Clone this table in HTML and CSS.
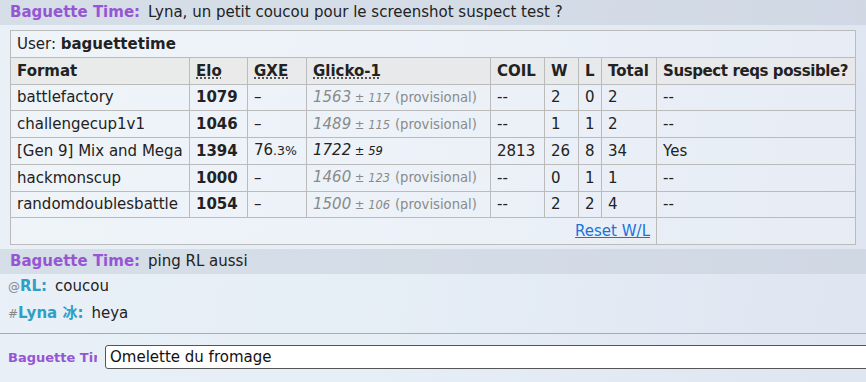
FILE: index.html
```html
<!DOCTYPE html>
<html lang="fr">
<head>
<meta charset="utf-8">
<title>Chat</title>
<link rel="stylesheet" href="styles.css">
</head>
<body>
<div class="room">
  <div class="log">
    <div class="chat hl"><strong class="name purple">Baguette Time:</strong><em class="msg">Lyna, un petit coucou pour le screenshot suspect test ?</em></div>
    <div class="infobox">
      <table class="ladder">
        <colgroup>
          <col class="c-format"><col class="c-elo"><col class="c-gxe"><col class="c-glicko"><col class="c-coil"><col class="c-w"><col class="c-l"><col class="c-total"><col class="c-sus">
        </colgroup>
        <tr><td colspan="9">User: <strong>baguettetime</strong></td></tr>
        <tr class="head">
          <th>Format</th>
          <th><abbr>Elo</abbr></th>
          <th><abbr>GXE</abbr></th>
          <th><abbr>Glicko-1</abbr></th>
          <th>COIL</th><th>W</th><th>L</th><th>Total</th><th class="sus">Suspect reqs possible?</th>
        </tr>
        <tr><td>battlefactory</td><td><strong>1079</strong></td><td>–</td><td class="prov"><em>1563<small> ± 117</small></em> <span class="pv">(provisional)</span></td><td>--</td><td>2</td><td>0</td><td>2</td><td>--</td></tr>
        <tr><td>challengecup1v1</td><td><strong>1046</strong></td><td>–</td><td class="prov"><em>1489<small> ± 115</small></em> <span class="pv">(provisional)</span></td><td>--</td><td>1</td><td>1</td><td>2</td><td>--</td></tr>
        <tr><td>[Gen 9] Mix and Mega</td><td><strong>1394</strong></td><td>76<small class="pct">.3%</small></td><td><em>1722<small> ± 59</small></em></td><td>2813</td><td>26</td><td>8</td><td>34</td><td>Yes</td></tr>
        <tr><td>hackmonscup</td><td><strong>1000</strong></td><td>–</td><td class="prov"><em>1460<small> ± 123</small></em> <span class="pv">(provisional)</span></td><td>--</td><td>0</td><td>1</td><td>1</td><td>--</td></tr>
        <tr><td>randomdoublesbattle</td><td><strong>1054</strong></td><td>–</td><td class="prov"><em>1500<small> ± 106</small></em> <span class="pv">(provisional)</span></td><td>--</td><td>2</td><td>2</td><td>4</td><td>--</td></tr>
        <tr><td colspan="8" class="reset"><a href="#">Reset W/L</a></td><td></td></tr>
      </table>
    </div>
    <div class="chat hl"><strong class="name purple">Baguette Time:</strong><em class="msg">ping RL aussi</em></div>
    <div class="chat"><strong class="name teal"><small class="rank">@</small>RL:</strong><em class="msg">coucou</em></div>
    <div class="chat"><strong class="name teal"><small class="rank">#</small>Lyna 冰:</strong><em class="msg">heya</em></div>
  </div>
  <div class="composer">
    <span class="me">Baguette Time</span>
    <div class="field">Omelette du fromage</div>
  </div>
</div>
</body>
</html>
```

FILE: styles.css
```css
html, body {
  margin: 0;
  padding: 0;
  height: 100%;
}
body {
  font-family: "DejaVu Sans", Verdana, "Noto Sans CJK SC", sans-serif;
  font-size: 15px;
  color: #222;
  background: linear-gradient(100deg, #e9f0f6 0%, #e6eef6 45%, #dfe5f1 100%);
  overflow: hidden;
}
.room {
  display: flex;
  flex-direction: column;
  height: 382px;
}
.log {
  flex: 0 0 334px;
  border-bottom: 1px solid #a9acaf;
  box-sizing: border-box;
}
.chat {
  padding: 3px 8px 4px 8px;
  line-height: 19px;
  display: flex;
  align-items: baseline;
}
.chat.hl {
  background: rgba(190, 200, 212, 0.45);
  padding: 3px 10px;
}
.name {
  font-weight: bold;
  margin-right: 8px;
}
.purple { color: #9656d4; }
.teal { color: #2f9fc6; }
.rank {
  color: #888;
  font-weight: normal;
  font-size: 12px;
}
.msg {
  font-style: normal;
  color: #222;
}
.infobox {
  padding: 5px 10px 4px 10px;
}
.ladder {
  border-collapse: collapse;
  table-layout: fixed;
  width: 846px;
  background: rgba(255, 255, 255, 0.25);
  border: 1px solid #bbb;
}
.c-format { width: 179px; }
.c-elo { width: 58px; }
.c-gxe { width: 59px; }
.c-glicko { width: 184px; }
.c-coil { width: 54px; }
.c-w { width: 34px; }
.c-l { width: 23px; }
.c-total { width: 55px; }
.c-sus { width: auto; }
.ladder td, .ladder th {
  border: 1px solid #bbb;
  padding: 0 6px;
  height: 25.75px;
  line-height: 18px;
  text-align: left;
  white-space: nowrap;
  overflow: hidden;
}
.ladder th {
  background: rgba(232, 232, 232, 0.85);
  font-weight: bold;
}
.ladder th.sus {
  letter-spacing: -0.4px;
}
abbr {
  text-decoration: underline dotted;
  text-underline-offset: 2px;
}
.ladder small {
  font-size: 11.5px;
}
.ladder small.pct {
  font-size: 12.5px;
}
.pv {
  font-size: 13.2px;
}
.prov {
  color: #8a8a8a;
}
.reset {
  text-align: right !important;
}
.reset a {
  color: #1a73d6;
}
.composer {
  display: flex;
  align-items: center;
  padding: 11px 0 0 8px;
}
.me {
  width: 89px;
  margin-right: 8px;
  overflow: hidden;
  white-space: nowrap;
  font-weight: bold;
  font-size: 13px;
  color: #9656d4;
}
.field {
  flex: 1;
  margin-right: -10px;
  height: 22px;
  line-height: 22px;
  background: #fff;
  border: 1px solid #555;
  border-radius: 3px;
  padding: 0 4px;
  font-size: 15px;
  color: #111;
}
```
